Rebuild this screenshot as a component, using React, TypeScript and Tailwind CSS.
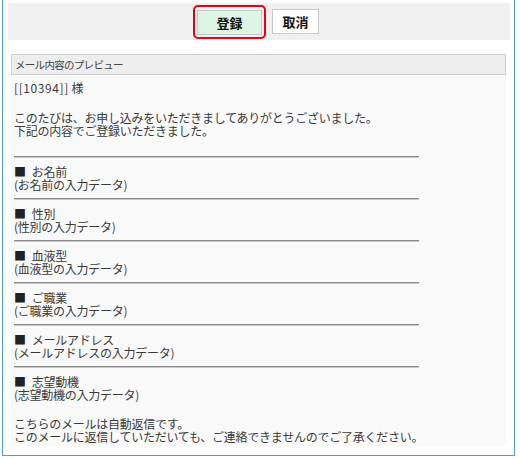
const items = [
  { label: "お名前", data: "(お名前の入力データ)" },
  { label: "性別", data: "(性別の入力データ)" },
  { label: "血液型", data: "(血液型の入力データ)" },
  { label: "ご職業", data: "(ご職業の入力データ)" },
  { label: "メールアドレス", data: "(メールアドレスの入力データ)" },
  { label: "志望動機", data: "(志望動機の入力データ)" },
];

const font = { fontFamily: '"Noto Sans CJK JP", "Noto Sans", sans-serif' };

const Separator = () => (
  <div className="w-[405px] h-[2px] border-t border-b border-t-[#8c8c8c] border-b-[#c9c9c9]" />
);

export default function App() {
  return (
    <div className="w-[520px] h-[459px] bg-white" style={font}>
      <div className="ml-[2px] w-[513px] h-[456px] border-x border-b border-[#4a9de8] pt-[3px] pl-[5px]">
        {/* button bar */}
        <div className="h-[37px] w-[502px] bg-[#f0f0f0] flex items-center pl-[185px] gap-[6px]">
          <div className="rounded-[5px] border-2 border-[#e60012] p-[2px]">
            <button className="w-[65px] h-[25px] bg-[#dcf5e4] border border-[#c8c8c8] text-[13px] font-bold text-[#111] leading-none">
              登録
            </button>
          </div>
          <button className="w-[47px] h-[25px] bg-white border border-[#c8c8c8] text-[13px] font-bold text-[#111] leading-none">
            取消
          </button>
        </div>

        {/* preview */}
        <div className="mt-[14px] ml-[3px] w-[495px]">
          <div className="h-[21px] bg-[#eeeeee] border border-[#cfcfcf] flex items-center pl-[3px] text-[10.5px] tracking-[-0.7px] text-[#444]">
            メール内容のプレビュー
          </div>
          <div className="bg-[#f9f9f9] px-[3px] pt-[6px] pb-[3px] text-[12px] leading-[13px] tracking-[-0.25px] text-[#3a3a3a]">
            <div>
              <span className="tracking-[0.6px]">[[10394]]</span> 様
            </div>
            <div className="mt-[17px]">
              <div>このたびは、お申し込みをいただきましてありがとうございました。</div>
              <div>下記の内容でご登録いただきました。</div>
            </div>
            <div className="mt-[19px]">
              {items.map((item) => (
                <div key={item.label}>
                  <Separator />
                  <div className="py-[7px]">
                    <div>
                      <span className="text-[#222]">■</span>
                      <span className="ml-[6px]">{item.label}</span>
                    </div>
                    <div>{item.data}</div>
                  </div>
                </div>
              ))}
            </div>
            <div className="mt-[9px]">
              <div>こちらのメールは自動返信です。</div>
              <div>このメールに返信していただいても、ご連絡できませんのでご了承ください。</div>
            </div>
          </div>
        </div>
      </div>
    </div>
  );
}
